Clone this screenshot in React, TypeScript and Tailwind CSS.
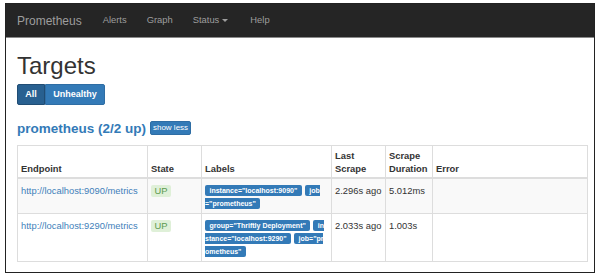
import React from "react";

const cell = "px-[3px] border-r border-b border-[#dddddd]";

function Badge({
  children,
  l = true,
  r = true,
}: {
  children: React.ReactNode;
  l?: boolean;
  r?: boolean;
}) {
  return (
    <span
      className={`inline-flex items-center h-[11px] bg-[#337ab7] text-white font-bold text-[7px] leading-[11px] whitespace-nowrap ${
        l ? "pl-[4.5px] rounded-l-[2px]" : "pl-0"
      } ${r ? "pr-[4.5px] rounded-r-[2px]" : "pr-0"}`}
    >
      {children}
    </span>
  );
}

function Line({ children }: { children: React.ReactNode }) {
  return <div className="flex items-center h-[13px] gap-[3px]">{children}</div>;
}

export default function App() {
  return (
    <div
      className="w-[600px] h-[277px] bg-white pt-[3px] pl-[5px]"
      style={{ fontFamily: '"Liberation Sans", Arial, sans-serif' }}
    >
      <div className="w-[590px] h-[270px] border border-[#222222] bg-white flex flex-col">
        {/* navbar */}
        <div className="h-[34px] bg-[#252525] border-b border-[#8a8a8a] flex items-center text-[#9d9d9d]">
          <span className="pl-[11px] pr-[11px] text-[12px]">Prometheus</span>
          <span className="px-[10px] text-[9.4px]">Alerts</span>
          <span className="px-[10px] text-[9.4px]">Graph</span>
          <span className="pl-[10px] pr-[12px] text-[9.4px] flex items-center">
            Status
            <span className="ml-[3px] w-0 h-0 border-l-[3px] border-r-[3px] border-t-[3px] border-l-transparent border-r-transparent border-t-[#9d9d9d]" />
          </span>
          <span className="px-[10px] text-[9.4px]">Help</span>
        </div>

        {/* main */}
        <div className="pl-[11px] pr-[6px] pt-[15px] text-[#333333]">
          <h1 className="text-[24px] leading-[26px] font-normal">Targets</h1>
          <div className="mt-[5px] flex">
            <div className="w-[28px] h-[21px] bg-[#286090] border border-[#204d74] rounded-l-[2px] flex items-center justify-center text-white font-bold text-[9px]">
              All
            </div>
            <div className="w-[60px] h-[21px] bg-[#337ab7] border border-[#2e6da4] rounded-r-[2px] flex items-center justify-center text-white font-bold text-[9px]">
              Unhealthy
            </div>
          </div>

          <div className="mt-[16px] flex items-start">
            <span className="text-[13.5px] leading-[16px] font-bold text-[#337ab7]">
              prometheus (2/2 up)
            </span>
            <span className="ml-[4px] w-[41px] h-[14px] bg-[#337ab7] border border-[#2e6da4] rounded-[2px] flex items-center justify-center text-white text-[8px]">
              show less
            </span>
          </div>

          {/* table */}
          <div className="mt-[8px] w-[571px] border-l border-t border-[#dddddd] grid grid-cols-[130px_54px_130px_54px_47px_155px] text-[9.4px] leading-[13px]">
            {/* header */}
            {[
              ["Endpoint"],
              ["State"],
              ["Labels"],
              ["Last", "Scrape"],
              ["Scrape", "Duration"],
              ["Error"],
            ].map((h, i) => (
              <div
                key={i}
                className="px-[3px] pt-[3px] pb-[2px] border-r border-b-2 border-[#dddddd] font-bold flex flex-col justify-end whitespace-nowrap"
              >
                {h.map((t) => (
                  <span key={t}>{t}</span>
                ))}
              </div>
            ))}

            {/* row 1 */}
            <div className={`${cell} pt-[5px] pb-[3px] bg-[#f9f9f9] text-[#3f7fba]`}>
              http://localhost:9090/metrics
            </div>
            <div className={`${cell} pt-[5px] pb-[3px] bg-[#f9f9f9]`}>
              <span className="inline-flex items-center h-[12px] px-[3.5px] rounded-[2px] bg-[#dff0d8] text-[#5b9a4f]">
                UP
              </span>
            </div>
            <div className={`${cell} pt-[5px] pb-[3px] bg-[#f9f9f9]`}>
              <Line>
                <Badge>instance="localhost:9090"</Badge>
                <Badge r={false}>job</Badge>
              </Line>
              <Line>
                <Badge l={false}>="prometheus"</Badge>
              </Line>
            </div>
            <div className={`${cell} pt-[5px] pb-[3px] bg-[#f9f9f9] whitespace-nowrap`}>2.296s ago</div>
            <div className={`${cell} pt-[5px] pb-[3px] bg-[#f9f9f9]`}>5.012ms</div>
            <div className={`${cell} pt-[5px] pb-[3px] bg-[#f9f9f9]`}></div>

            {/* row 2 */}
            <div className={`${cell} pt-[5px] pb-[3px] text-[#3f7fba]`}>
              http://localhost:9290/metrics
            </div>
            <div className={`${cell} pt-[5px] pb-[3px]`}>
              <span className="inline-flex items-center h-[12px] px-[3.5px] rounded-[2px] bg-[#dff0d8] text-[#5b9a4f]">
                UP
              </span>
            </div>
            <div className={`${cell} pt-[5px] pb-[3px] overflow-hidden`}>
              <Line>
                <Badge>group="Thriftly Deployment"</Badge>
                <Badge r={false}>in</Badge>
              </Line>
              <Line>
                <Badge l={false}>stance="localhost:9290"</Badge>
                <Badge r={false}>job="pr</Badge>
              </Line>
              <Line>
                <Badge l={false}>ometheus"</Badge>
              </Line>
            </div>
            <div className={`${cell} pt-[5px] pb-[3px] whitespace-nowrap`}>2.033s ago</div>
            <div className={`${cell} pt-[5px] pb-[3px]`}>1.003s</div>
            <div className={`${cell} pt-[5px] pb-[3px]`}></div>
          </div>
        </div>
      </div>
    </div>
  );
}
